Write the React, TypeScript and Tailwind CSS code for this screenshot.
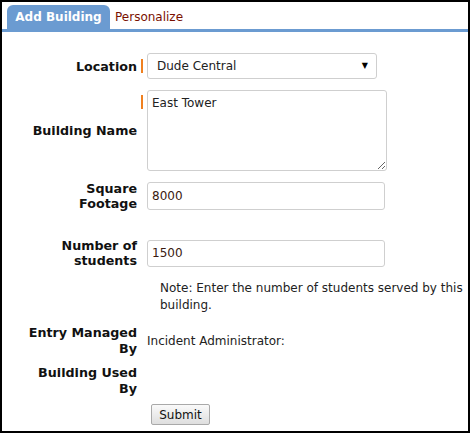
import React from "react";

const font = { fontFamily: '"DejaVu Sans", Verdana, sans-serif' };

function Marker({ top = false }: { top?: boolean }) {
  return (
    <div className={`w-[10px] self-stretch flex ${top ? "items-start pt-[5px]" : "items-center"} pl-[4px]`}>
      <span className="block w-[2px] h-[14px] bg-[#f0801f]" />
    </div>
  );
}

function Label({ children }: { children: React.ReactNode }) {
  return (
    <div className="w-[135px] shrink-0 text-right font-bold text-[12.7px] leading-[15px] text-[#111]">
      {children}
    </div>
  );
}

export default function App() {
  return (
    <div
      className="w-[470px] h-[433px] border-2 border-black bg-white overflow-hidden"
      style={font}
    >
      {/* Tabs */}
      <div className="flex items-end pt-[3px] pl-[5px]">
        <div className="w-[103px] h-[24px] rounded-t-[6px] bg-[#6b9bd1] text-white font-bold text-[12px] flex items-center justify-center">
          Add Building
        </div>
        <div className="h-[24px] flex items-center pl-[5px] text-[12px] text-[#7a1000]">
          Personalize
        </div>
      </div>
      <div className="h-[3px] bg-[#6b9bd1]" />

      {/* Form */}
      <div className="flex flex-col">
        <div className="flex items-center mt-[21px]">
          <Label>Location</Label>
          <Marker />
          <div className="w-[230px] h-[26px] border border-[#cfcfcf] rounded-[3px] flex items-center justify-between pl-[9px] pr-[8px] text-[12px] text-[#222]">
            <span>Dude Central</span>
            <span className="text-[8px] text-black">▼</span>
          </div>
        </div>

        <div className="flex items-center mt-[11px]">
          <Label>Building Name</Label>
          <Marker top />
          <textarea
            defaultValue="East Tower"
            className="w-[240px] h-[81px] border border-[#cfcfcf] rounded-[3px] px-[4px] py-[3px] text-[12px] text-[#222] outline-none"
            style={font}
          />
        </div>

        <div className="flex items-center mt-[10px]">
          <Label>
            Square
            <br />
            Footage
          </Label>
          <div className="w-[10px]" />
          <input
            defaultValue="8000"
            className="w-[238px] h-[28px] border border-[#cfcfcf] rounded-[3px] px-[4px] text-[12px] text-[#3a1a10] outline-none"
            style={font}
          />
        </div>

        <div className="flex items-center mt-[27px]">
          <Label>
            Number of
            <br />
            students
          </Label>
          <div className="w-[10px]" />
          <input
            defaultValue="1500"
            className="w-[238px] h-[27px] border border-[#cfcfcf] rounded-[3px] px-[4px] text-[12px] text-[#3a1a10] outline-none"
            style={font}
          />
        </div>

        <div className="flex mt-[12px]">
          <div className="w-[158px] shrink-0" />
          <p className="w-[305px] text-[12px] leading-[17px] text-[#222]">
            Note: Enter the number of students served by this building.
          </p>
        </div>

        <div className="flex items-center mt-[11px]">
          <Label>
            <span className="leading-[16px] block">
              Entry Managed
              <br />
              By
            </span>
          </Label>
          <div className="w-[10px]" />
          <span className="text-[12px] text-[#222]">Incident Administrator:</span>
        </div>

        <div className="flex items-center mt-[8px]">
          <Label>
            <span className="leading-[16px] block">
              Building Used
              <br />
              By
            </span>
          </Label>
        </div>

        <div className="flex mt-[7px]">
          <div className="w-[149px] shrink-0" />
          <button className="w-[59px] h-[21px] border border-[#a9a9a9] rounded-[2px] bg-gradient-to-b from-[#fafafa] to-[#dedede] text-[12px] text-[#111] leading-none">
            Submit
          </button>
        </div>
      </div>
    </div>
  );
}
